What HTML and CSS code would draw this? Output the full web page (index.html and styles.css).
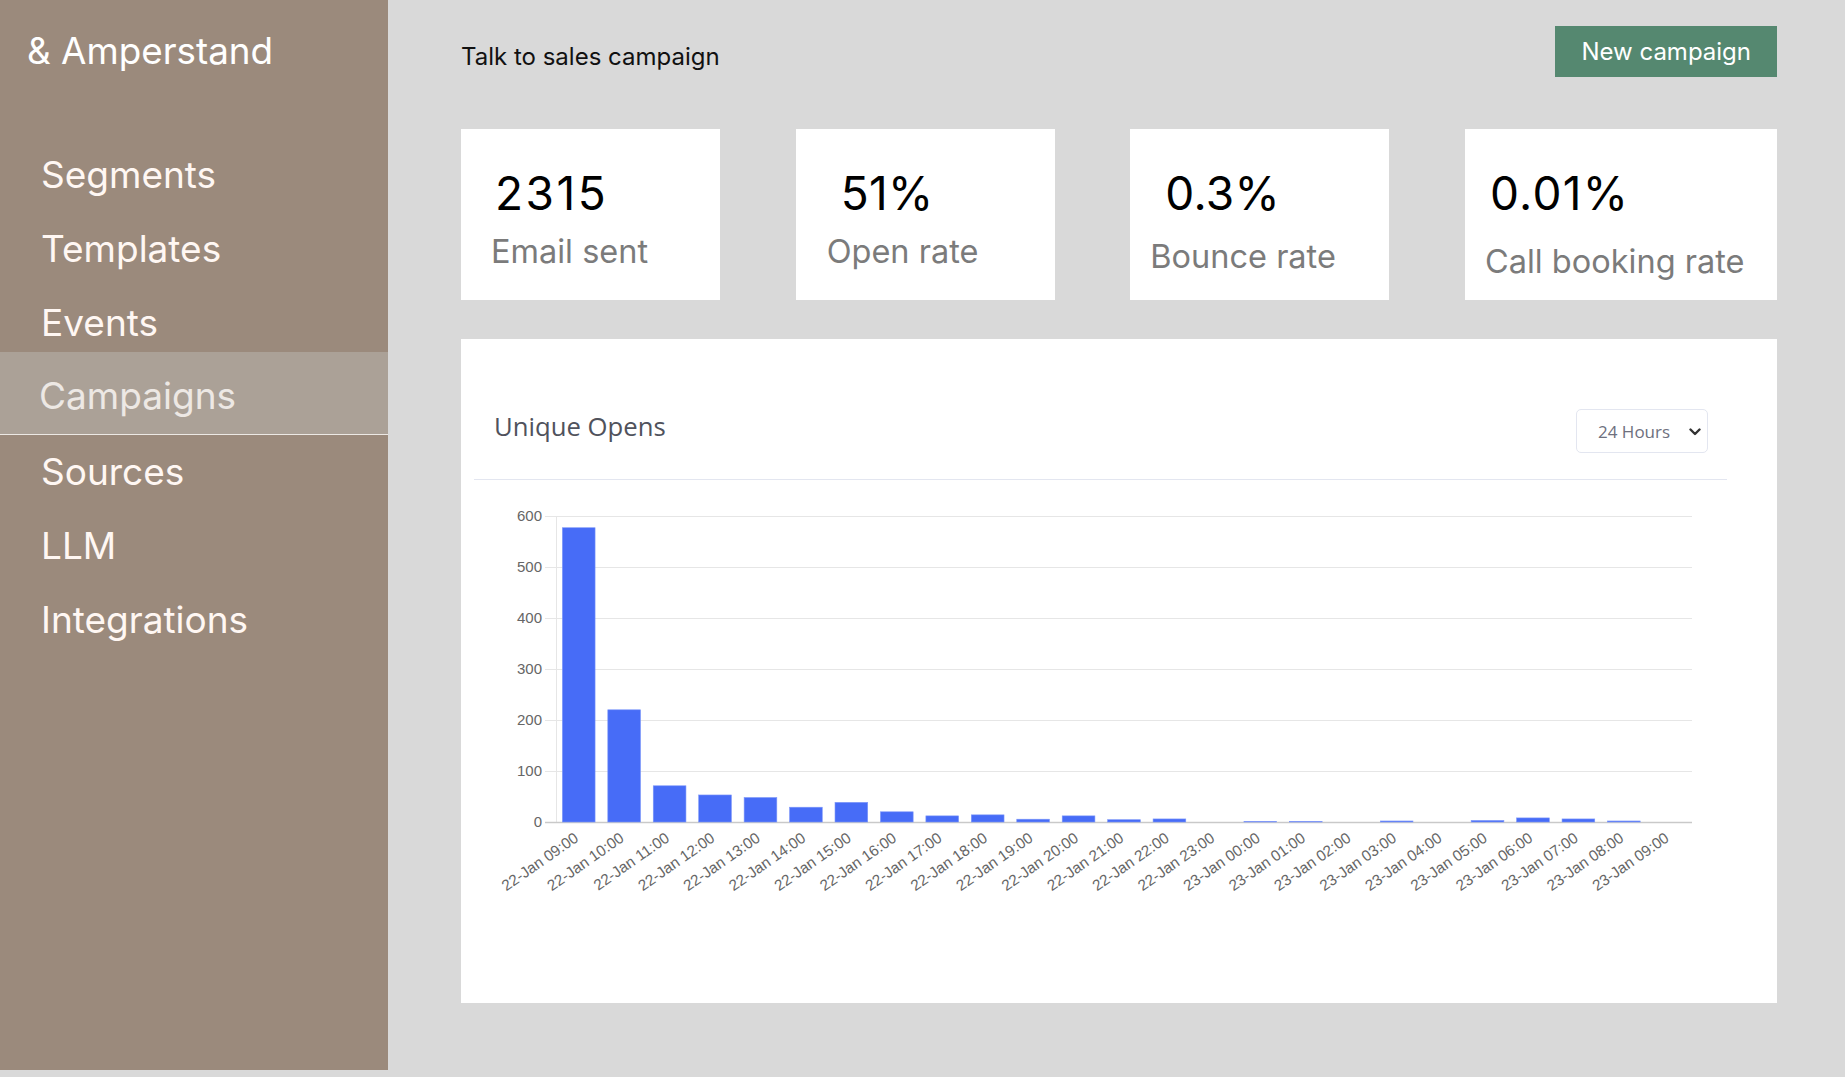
FILE: index.html
```html
<!DOCTYPE html>
<html lang="en">
<head>
<meta charset="utf-8">
<title>Talk to sales campaign</title>
<link rel="stylesheet" href="styles.css">
</head>
<body>
<div class="app">
  <aside class="sidebar">
    <div class="brand">&amp; Amperstand</div>
    <nav class="nav">
      <a class="nav-item">Segments</a>
      <a class="nav-item">Templates</a>
      <a class="nav-item">Events</a>
      <a class="nav-item active">Campaigns</a>
      <a class="nav-item">Sources</a>
      <a class="nav-item">LLM</a>
      <a class="nav-item">Integrations</a>
    </nav>
  </aside>
  <main class="main">
    <header class="topbar">
      <h1 class="page-title">Talk to sales campaign</h1>
      <button class="btn-primary">New campaign</button>
    </header>
    <section class="stats">
      <div class="stat stat-email">
        <div class="stat-value">2315</div>
        <div class="stat-label">Email sent</div>
      </div>
      <div class="stat stat-open">
        <div class="stat-value">51%</div>
        <div class="stat-label">Open rate</div>
      </div>
      <div class="stat stat-bounce">
        <div class="stat-value">0.3%</div>
        <div class="stat-label">Bounce rate</div>
      </div>
      <div class="stat stat-booking">
        <div class="stat-value">0.01%</div>
        <div class="stat-label">Call booking rate</div>
      </div>
    </section>
    <section class="chart-card">
      <div class="chart-panel">
        <div class="chart-header">
          <h2 class="chart-title">Unique Opens</h2>
          <div class="select">
            <span>24 Hours</span>
            <svg class="chev" width="12" height="8" viewBox="0 0 12 8"><path d="M1.5 1.5 L6 6 L10.5 1.5" fill="none" stroke="#333" stroke-width="2.4" stroke-linecap="round" stroke-linejoin="round"/></svg>
          </div>
        </div>
        <svg class="chart" width="1253" height="523" viewBox="0 0 1253 523">
          <g class="grid">
            <line x1="71" y1="36.5" x2="1218" y2="36.5"/>
            <line x1="71" y1="87.5" x2="1218" y2="87.5"/>
            <line x1="71" y1="138.5" x2="1218" y2="138.5"/>
            <line x1="71" y1="189.5" x2="1218" y2="189.5"/>
            <line x1="71" y1="240.5" x2="1218" y2="240.5"/>
            <line x1="71" y1="291.5" x2="1218" y2="291.5"/>
            <line x1="82.5" y1="36" x2="82.5" y2="342"/>
          </g>
          <line class="zero" x1="71" y1="342.5" x2="1218" y2="342.5"/>
          <g class="ylabels">
            <text x="68" y="37">600</text>
            <text x="68" y="88">500</text>
            <text x="68" y="139">400</text>
            <text x="68" y="190">300</text>
            <text x="68" y="241">200</text>
            <text x="68" y="292">100</text>
            <text x="68" y="343">0</text>
          </g>
          <g class="bars">
            <rect x="88.37" y="47.73" width="32.7" height="294.27"/>
            <rect x="133.81" y="229.8" width="32.7" height="112.2"/>
            <rect x="179.25" y="305.79" width="32.7" height="36.21"/>
            <rect x="224.69" y="314.97" width="32.7" height="27.03"/>
            <rect x="270.13" y="317.52" width="32.7" height="24.48"/>
            <rect x="315.57" y="327.21" width="32.7" height="14.79"/>
            <rect x="361.01" y="322.36" width="32.7" height="19.64"/>
            <rect x="406.45" y="331.8" width="32.7" height="10.2"/>
            <rect x="451.89" y="335.88" width="32.7" height="6.12"/>
            <rect x="497.33" y="334.86" width="32.7" height="7.14"/>
            <rect x="542.77" y="339.2" width="32.7" height="2.8"/>
            <rect x="588.21" y="335.88" width="32.7" height="6.12"/>
            <rect x="633.65" y="339.7" width="32.7" height="2.3"/>
            <rect x="679.09" y="338.94" width="32.7" height="3.06"/>
            <rect x="769.97" y="341.49" width="32.7" height="0.51"/>
            <rect x="815.41" y="341.49" width="32.7" height="0.51"/>
            <rect x="906.29" y="340.98" width="32.7" height="1.02"/>
            <rect x="997.17" y="340.47" width="32.7" height="1.53"/>
            <rect x="1042.61" y="337.92" width="32.7" height="4.08"/>
            <rect x="1088.05" y="338.94" width="32.7" height="3.06"/>
            <rect x="1133.49" y="340.98" width="32.7" height="1.02"/>
          </g>
          <g class="xlabels">
            <text transform="translate(103.2 357) rotate(-35)">22-Jan 09:00</text>
            <text transform="translate(148.64 357) rotate(-35)">22-Jan 10:00</text>
            <text transform="translate(194.08 357) rotate(-35)">22-Jan 11:00</text>
            <text transform="translate(239.52 357) rotate(-35)">22-Jan 12:00</text>
            <text transform="translate(284.96 357) rotate(-35)">22-Jan 13:00</text>
            <text transform="translate(330.4 357) rotate(-35)">22-Jan 14:00</text>
            <text transform="translate(375.84 357) rotate(-35)">22-Jan 15:00</text>
            <text transform="translate(421.28 357) rotate(-35)">22-Jan 16:00</text>
            <text transform="translate(466.72 357) rotate(-35)">22-Jan 17:00</text>
            <text transform="translate(512.16 357) rotate(-35)">22-Jan 18:00</text>
            <text transform="translate(557.6 357) rotate(-35)">22-Jan 19:00</text>
            <text transform="translate(603.04 357) rotate(-35)">22-Jan 20:00</text>
            <text transform="translate(648.48 357) rotate(-35)">22-Jan 21:00</text>
            <text transform="translate(693.92 357) rotate(-35)">22-Jan 22:00</text>
            <text transform="translate(739.36 357) rotate(-35)">22-Jan 23:00</text>
            <text transform="translate(784.8 357) rotate(-35)">23-Jan 00:00</text>
            <text transform="translate(830.24 357) rotate(-35)">23-Jan 01:00</text>
            <text transform="translate(875.68 357) rotate(-35)">23-Jan 02:00</text>
            <text transform="translate(921.12 357) rotate(-35)">23-Jan 03:00</text>
            <text transform="translate(966.56 357) rotate(-35)">23-Jan 04:00</text>
            <text transform="translate(1012 357) rotate(-35)">23-Jan 05:00</text>
            <text transform="translate(1057.44 357) rotate(-35)">23-Jan 06:00</text>
            <text transform="translate(1102.88 357) rotate(-35)">23-Jan 07:00</text>
            <text transform="translate(1148.32 357) rotate(-35)">23-Jan 08:00</text>
            <text transform="translate(1193.76 357) rotate(-35)">23-Jan 09:00</text>
          </g>
        </svg>
      </div>
    </section>
  </main>
</div>
</body>
</html>
```
FILE: styles.css
```css
* { box-sizing: border-box; }
html, body { margin: 0; padding: 0; }
body {
  background: #d9d9d9;
  font-family: Inter, "Noto Sans", "Liberation Sans", sans-serif;
  color: #111;
}
.app {
  display: flex;
  align-items: flex-start;
  width: 1845px;
  height: 1077px;
}
.sidebar {
  width: 388px;
  height: 1070px;
  flex: none;
  background: #9b8a7c;
}
.brand {
  padding: 29px 0 0 27px;
  font-size: 36.8px;
  line-height: 44px;
  color: #fff;
  height: 138px;
}
.nav { display: flex; flex-direction: column; }
.nav-item {
  display: block;
  height: 74px;
  line-height: 74px;
  font-size: 37px;
  padding-left: 41px;
  color: #fff7f3;
}
.nav-item.active {
  margin-top: -8px;
  height: 83px;
  line-height: 74px;
  padding-top: 7px;
  padding-left: 39px;
  background: #aba197;
  color: #ede8e4;
  border-bottom: 1px solid #ece8e4;
}
.main {
  flex: 1;
  padding: 26px 68px 0 73px;
}
.topbar {
  display: flex;
  justify-content: space-between;
  align-items: flex-start;
  height: 51px;
}
.page-title {
  margin: 16px 0 0 0;
  font-size: 24px;
  font-weight: 400;
  line-height: 29px;
  color: #111;
}
.btn-primary {
  height: 51px;
  padding: 0 26px;
  border: 0;
  border-radius: 0;
  background: #558870;
  color: #fff;
  font-family: Inter, "Noto Sans", sans-serif;
  font-size: 24px;
  line-height: 51px;
}
.stats {
  margin-top: 52px;
  display: flex;
  justify-content: space-between;
}
.stat {
  width: 259px;
  height: 171px;
  background: #fff;
  padding-top: 36px;
}
.stat-value {
  font-size: 46px;
  line-height: 56px;
  color: #000;
  padding-left: var(--vx);
  letter-spacing: var(--vls);
}
.stat-label {
  font-size: 32.5px;
  line-height: 39px;
  color: #7b7b7b;
  padding-left: var(--lx);
  margin-top: var(--ly);
}
.stat-email { --vx: 34px; --vls: 2.5px; --lx: 30px; --ly: 11px; }
.stat-open { --vx: 45px; --vls: 0.3px; --lx: 31px; --ly: 11px; }
.stat-bounce { --vx: 35px; --vls: 0.3px; --lx: 20px; --ly: 16px; }
.stat-booking { width: 312px; --vx: 25px; --vls: 1.3px; --lx: 20px; --ly: 21px; }
.chart-card {
  margin-top: 39px;
  height: 664px;
  background: #fff;
  padding: 0 50px 0 13px;
}
.chart-panel { height: 100%; }
.chart-header {
  display: flex;
  justify-content: space-between;
  align-items: flex-start;
  padding: 70px 19px 26px 20px;
  border-bottom: 1px solid #e3e6f0;
}
.chart-title {
  margin: 1px 0 0 0;
  font-family: "Open Sans", "Noto Sans", sans-serif;
  font-size: 25.7px;
  font-weight: 400;
  line-height: 34px;
  color: #50525c;
}
.select {
  width: 132px;
  height: 44px;
  border: 1px solid #e3e6f0;
  border-radius: 5px;
  display: flex;
  align-items: center;
  justify-content: space-between;
  padding: 0 6px 0 21px;
  font-family: "Open Sans", "Noto Sans", sans-serif;
  font-size: 17px;
  color: #6e707e;
}
.chev { display: block; margin-top: 1px; }
.chart { display: block; }
.grid line { stroke: #e6e6e6; stroke-width: 1; }
.zero { stroke: #c9c9c9; stroke-width: 1.5; }
.ylabels text {
  font-family: "Liberation Sans", Arial, sans-serif;
  font-size: 15px;
  fill: #666;
  text-anchor: end;
  dominant-baseline: middle;
}
.xlabels text {
  font-family: "Liberation Sans", Arial, sans-serif;
  font-size: 15.3px;
  fill: #666;
  text-anchor: end;
  dominant-baseline: middle;
}
.bars rect { fill: #476cf7; stroke: #7d97f9; stroke-width: 0.6; }
```
